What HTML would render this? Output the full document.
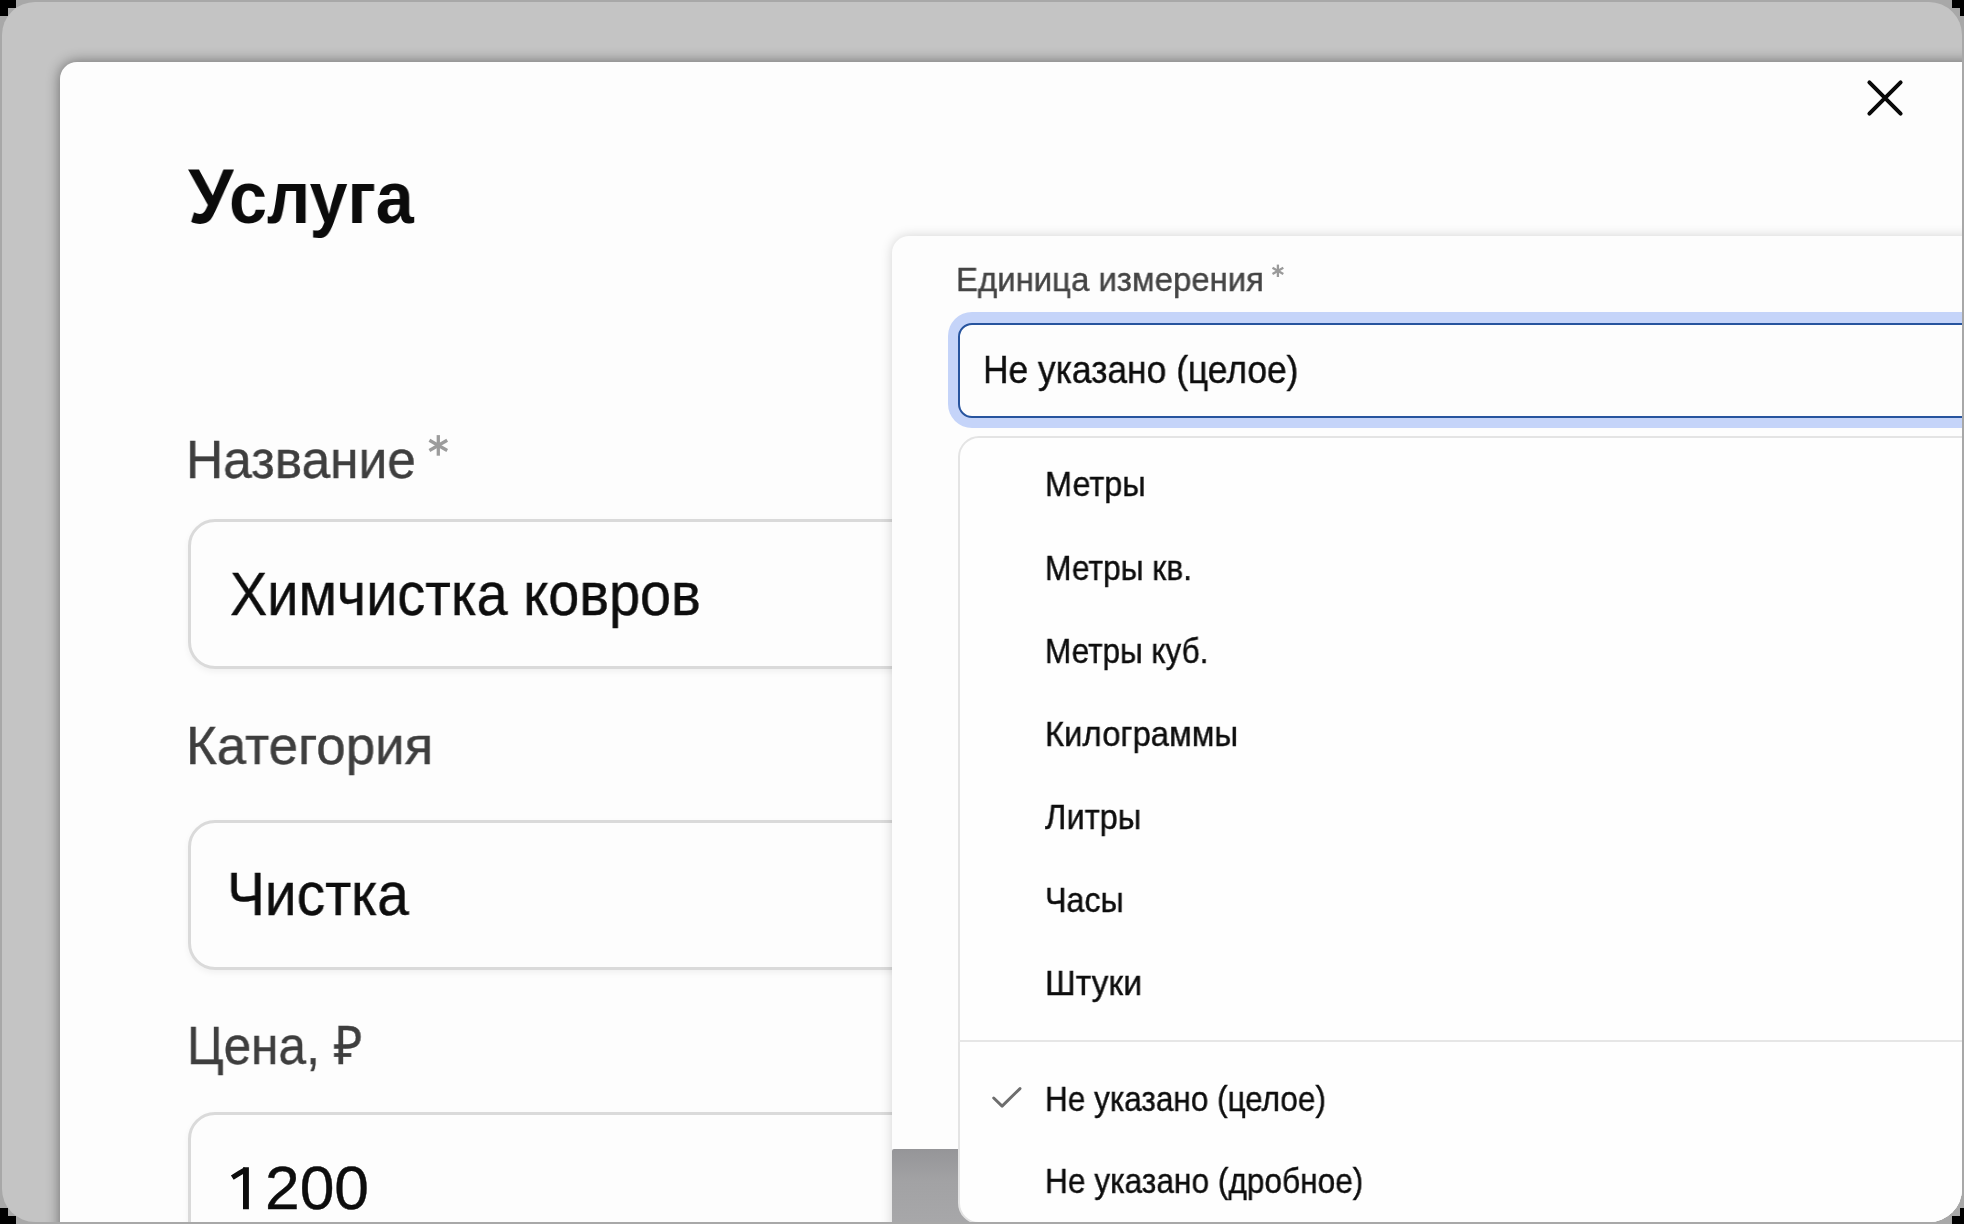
<!DOCTYPE html>
<html><head><meta charset="utf-8"><style>
html,body{margin:0;padding:0;width:1964px;height:1224px;overflow:hidden;background:#a8a8a8;}
.blk{position:absolute;background:#000;}
#frame{position:absolute;left:2px;top:2px;width:1960px;height:1220px;border-radius:33px;overflow:hidden;background:#c4c4c4;}
#modal{position:absolute;left:60px;top:62px;width:2000px;height:1300px;border-top-left-radius:17px;background:#fdfdfd;
  box-shadow:0 0 14px 0 rgba(0,0,0,0.47);}
.inp{position:absolute;left:187.6px;width:1000px;height:143.4px;border:3px solid #dadada;border-radius:27px;background:#fdfdfd;
  box-shadow:0 3px 6px rgba(0,0,0,0.05);}
#panel{position:absolute;left:892px;top:235.5px;width:1200px;height:1100px;border-radius:17px 17px 0 0;background:#fdfdfd;
  box-shadow:0 0 12px rgba(0,0,0,0.17);}
#gray{position:absolute;left:892px;top:1149.3px;width:90px;height:80px;background:linear-gradient(#959598,#a2a2a4 40%,#a8a8aa);border-top-left-radius:2px;}
#ring{position:absolute;left:948px;top:312px;width:1100px;height:116px;border-radius:24px;background:#c5d4f9;}
#sel{position:absolute;left:958px;top:322.7px;width:1100px;height:91.8px;border:2px solid #27549e;border-radius:14px;background:#fdfdfd;box-sizing:content-box;}
#menu{position:absolute;left:958px;top:435.9px;width:1100px;height:784.1px;border:2px solid #e4e4e4;border-radius:21px;background:#fefefe;}
#div{position:absolute;left:958px;top:1040px;width:1100px;height:2px;background:#e6e6e6;}
.t{position:absolute;font-family:"Liberation Sans",sans-serif;line-height:1;white-space:nowrap;-webkit-text-stroke:0.4px currentColor;will-change:transform;}
.ast{position:absolute;font-family:"Liberation Sans",sans-serif;line-height:1;color:#9b9b9b;}
</style></head><body>
<div class="blk" style="left:0;top:0;width:16px;height:8px"></div>
<div class="blk" style="left:0;top:8px;width:8px;height:8px"></div>
<div class="blk" style="left:1952px;top:0;width:12px;height:8px"></div>
<div class="blk" style="left:1960px;top:8px;width:4px;height:8px"></div>
<div class="blk" style="left:0;top:1216px;width:16px;height:8px"></div>
<div class="blk" style="left:0;top:1208px;width:8px;height:8px"></div>
<div class="blk" style="left:1952px;top:1216px;width:12px;height:8px"></div>
<div class="blk" style="left:1960px;top:1208px;width:4px;height:8px"></div>
<div id="frame">
<div style="position:absolute;left:-2px;top:-2px;width:1964px;height:1224px;">
<div id="modal"></div>
<div class="inp" style="top:519.3px"></div>
<div class="inp" style="top:820.2px"></div>
<div class="inp" style="top:1112.2px"></div>
<div id="panel"></div>
<div id="gray"></div>
<div id="ring"></div>
<div id="sel"></div>
<div id="menu"></div>
<div id="div"></div>
<svg style="position:absolute;left:0;top:0" width="1964" height="1224">
 <path d="M1869.4 82.4 L1900.6 113.6 M1900.6 82.4 L1869.4 113.6" stroke="#0a0a0a" stroke-width="4" stroke-linecap="round" fill="none"/>
 <path d="M243 1167.2 H248.9 V1209.2 H243 Z" fill="#0d0d0d"/>
 <path d="M245.8 1169.6 Q238 1174 232.3 1177.6" stroke="#0d0d0d" stroke-width="5.2" stroke-linecap="butt" fill="none"/>
 <path d="M993.7 1098 L1002.1 1106.1 L1020 1088.6" stroke="#6d6d6d" stroke-width="2.9" stroke-linecap="round" stroke-linejoin="round" fill="none"/>
</svg>
<div class="t" style="left:188.0px;top:157.0px;font-size:78.50px;color:#0b0b0b;font-weight:700;letter-spacing:0.00px;transform:scaleX(0.9297);transform-origin:0 0;-webkit-text-stroke:0;">У</div>
<div class="t" style="left:229.1px;top:160.7px;font-size:74.20px;color:#0b0b0b;font-weight:700;letter-spacing:0.00px;transform:scaleX(0.9203);transform-origin:0 0;-webkit-text-stroke:0;">слуга</div>
<div class="t" style="left:186.0px;top:433.3px;font-size:53.30px;color:#3e3e3e;font-weight:400;letter-spacing:0.00px;transform:scaleX(0.9652);transform-origin:0 0;">Название</div>
<div class="t" style="left:186.0px;top:718.6px;font-size:53.30px;color:#3e3e3e;font-weight:400;letter-spacing:0.00px;transform:scaleX(0.9922);transform-origin:0 0;">Категория</div>
<div class="t" style="left:186.6px;top:1018.5px;font-size:53.30px;color:#3e3e3e;font-weight:400;letter-spacing:0.00px;transform:scaleX(0.9286);transform-origin:0 0;">Цена, ₽</div>
<div class="t" style="left:229.6px;top:562.5px;font-size:62.00px;color:#0d0d0d;font-weight:400;letter-spacing:0.00px;transform:scaleX(0.9015);transform-origin:0 0;">Химчистка ковров</div>
<div class="t" style="left:226.6px;top:863.2px;font-size:62.00px;color:#0d0d0d;font-weight:400;letter-spacing:0.00px;transform:scaleX(0.9172);transform-origin:0 0;">Чистка</div>
<div class="t" style="left:265.0px;top:1156.5px;font-size:62.00px;color:#0d0d0d;font-weight:400;letter-spacing:0.00px;transform:scaleX(1.0058);transform-origin:0 0;">200</div>
<div class="t" style="left:956.3px;top:263.1px;font-size:33.70px;color:#444444;font-weight:400;letter-spacing:0.00px;transform:scaleX(0.9774);transform-origin:0 0;">Единица измерения</div>
<div class="t" style="left:983.4px;top:350.6px;font-size:38.80px;color:#0d0d0d;font-weight:400;letter-spacing:0.00px;transform:scaleX(0.9117);transform-origin:0 0;">Не указано (целое)</div>
<div class="t" style="left:1045.0px;top:467.4px;font-size:34.50px;color:#0d0d0d;font-weight:400;letter-spacing:0.00px;transform:scaleX(0.9407);transform-origin:0 0;">Метры</div>
<div class="t" style="left:1045.0px;top:550.8px;font-size:34.50px;color:#0d0d0d;font-weight:400;letter-spacing:0.00px;transform:scaleX(0.9209);transform-origin:0 0;">Метры кв.</div>
<div class="t" style="left:1045.0px;top:634.2px;font-size:34.50px;color:#0d0d0d;font-weight:400;letter-spacing:0.00px;transform:scaleX(0.9128);transform-origin:0 0;">Метры куб.</div>
<div class="t" style="left:1045.0px;top:717.1px;font-size:34.50px;color:#0d0d0d;font-weight:400;letter-spacing:0.00px;transform:scaleX(0.9543);transform-origin:0 0;">Килограммы</div>
<div class="t" style="left:1045.0px;top:800.1px;font-size:34.50px;color:#0d0d0d;font-weight:400;letter-spacing:0.00px;transform:scaleX(0.9450);transform-origin:0 0;">Литры</div>
<div class="t" style="left:1045.0px;top:882.8px;font-size:34.50px;color:#0d0d0d;font-weight:400;letter-spacing:0.00px;transform:scaleX(0.9339);transform-origin:0 0;">Часы</div>
<div class="t" style="left:1045.0px;top:966.1px;font-size:34.50px;color:#0d0d0d;font-weight:400;letter-spacing:0.00px;transform:scaleX(0.9751);transform-origin:0 0;">Штуки</div>
<div class="t" style="left:1045.0px;top:1081.8px;font-size:34.50px;color:#0d0d0d;font-weight:400;letter-spacing:0.00px;transform:scaleX(0.9130);transform-origin:0 0;">Не указано (целое)</div>
<div class="t" style="left:1045.0px;top:1163.8px;font-size:34.50px;color:#0d0d0d;font-weight:400;letter-spacing:0.00px;transform:scaleX(0.9172);transform-origin:0 0;">Не указано (дробное)</div>

<svg style="position:absolute;left:0;top:0" width="1964" height="1224">
 <g stroke="#9c9c9c" stroke-width="3.3" transform="translate(438.3 445.4)">
  <line x1="0" y1="-10.3" x2="0" y2="10.3"/><line x1="-8.9" y1="-5.15" x2="8.9" y2="5.15"/><line x1="-8.9" y1="5.15" x2="8.9" y2="-5.15"/>
 </g>
 <g stroke="#9a9a9a" stroke-width="2.3" transform="translate(1277.9 270.8)">
  <line x1="0" y1="-6.2" x2="0" y2="6.2"/><line x1="-5.4" y1="-3.1" x2="5.4" y2="3.1"/><line x1="-5.4" y1="3.1" x2="5.4" y2="-3.1"/>
 </g>
</svg>
</div>
</div>
</body></html>
